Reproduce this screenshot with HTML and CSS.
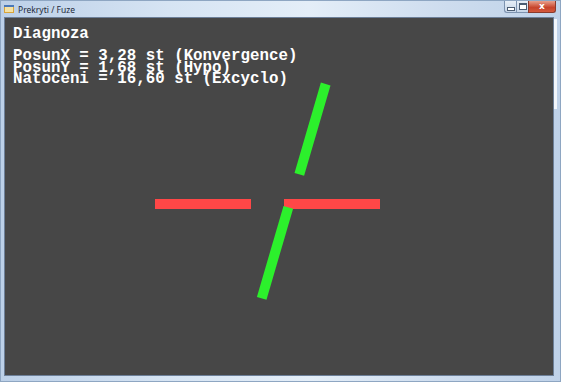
FILE: index.html
```html
<!DOCTYPE html>
<html lang="cs">
<head>
  <meta charset="UTF-8" />
  <title>Prekryti / Fuze</title>
  <link rel="stylesheet" href="styles.css">
</head>
<body>
  <div class="window">
    <div class="titlebar">
      <svg class="appicon" width="10" height="10" viewBox="0 0 10 10">
        <rect x="0" y="1" width="10" height="8" fill="#d9a53a" />
        <rect x="1" y="3" width="8" height="5" fill="#f4e2a6" />
        <rect x="0" y="1" width="10" height="2" fill="#4a78b8" />
      </svg>
      <span class="title">Prekryti / Fuze</span>
      <div class="buttons">
        <div class="btn btn-min"><span class="glyph-min"></span></div>
        <div class="btn btn-max"><span class="glyph-max"></span></div>
        <div class="btn btn-close">x</div>
      </div>
    </div>
    <div class="frame">
      <div class="client">
        <div class="info">
          <div class="heading">Diagnoza</div>
          <div class="line">PosunX = 3,28 st (Konvergence)</div>
          <div class="line">PosunY = 1,68 st (Hypo)</div>
          <div class="line">Natoceni = 16,60 st (Excyclo)</div>
        </div>
        <svg class="scene" width="550" height="359" viewBox="0 0 550 359">
          <line x1="151" y1="187" x2="247" y2="187" class="red" />
          <line x1="280" y1="187" x2="376" y2="187" class="red" />
          <line x1="321.7" y1="67" x2="295.3" y2="157.3" class="green" />
          <line x1="284.3" y1="190.3" x2="257.7" y2="281.3" class="green" />
        </svg>
      </div>
      <div class="edge"></div>
    </div>
  </div>
</body>
</html>
```

FILE: styles.css
```css
body {
  margin: 0;
  padding: 0;
  background: #c9d9ec;
}
.window {
  width: 561px;
  height: 382px;
  display: flex;
  flex-direction: column;
  background: linear-gradient(90deg, #bcd0e8 0%, #d6e4f3 30%, #e4eef8 55%, #cddcee 80%, #bfd2e9 100%);
  box-sizing: border-box;
  border: 1px solid #8ea6c2;
}
.titlebar {
  height: 16px;
  display: flex;
  align-items: center;
  padding-left: 3px;
  position: relative;
}
.appicon {
  margin-right: 4px;
}
.title {
  font-family: "Noto Sans", sans-serif;
  font-size: 8.5px;
  color: #1e2a3a;
}
.buttons {
  position: absolute;
  right: 4px;
  top: 0;
  display: flex;
}
.btn {
  height: 12px;
  border: 1px solid #7d93b0;
  border-top: none;
  box-sizing: border-box;
  display: flex;
  align-items: center;
  justify-content: center;
  background: linear-gradient(#e6eef7, #c6d5e7);
}
.btn-min, .btn-max {
  width: 12px;
  border-right: none;
}
.btn-min {
  border-radius: 0 0 0 3px;
}
.glyph-min {
  width: 6px;
  height: 2px;
  margin-top: 4px;
  border: 1px solid #4b5c72;
  background: #fff;
}
.glyph-max {
  width: 6px;
  height: 4px;
  border: 1px solid #4b5c72;
  border-top-width: 2px;
  background: #fff;
}
.btn-close {
  width: 28px;
  border-radius: 0 0 3px 0;
  background: linear-gradient(#e8a08c, #c7432b 60%, #d45a3e);
  border-color: #8a3a2c;
  color: #fff;
  font-family: "DejaVu Sans", sans-serif;
  font-weight: bold;
  font-size: 9px;
  line-height: 1;
}
.frame {
  flex: 1;
  display: flex;
  padding: 0 0 5px 3px;
}
.client {
  width: 550px;
  height: 359px;
  background: #474747;
  position: relative;
  border: 1px solid #6d8099;
  box-sizing: border-box;
}
.edge {
  width: 3px;
  margin: 2px 0 0 0;
  height: 90px;
  background: #f2f6fb;
}
.info {
  padding: 8px 0 0 8px;
  font-family: "Liberation Mono", "Courier New", monospace;
  font-weight: bold;
  font-size: 15.8px;
  color: #ffffff;
  position: relative;
  z-index: 1;
}
.heading {
  line-height: 16px;
  margin-bottom: 9px;
}
.line {
  line-height: 11.5px;
  white-space: pre;
}
.scene {
  position: absolute;
  left: -1px;
  top: -1px;
}
.red {
  stroke: #ff4747;
  stroke-width: 10;
}
.green {
  stroke: #2cf02c;
  stroke-width: 10;
}
```
